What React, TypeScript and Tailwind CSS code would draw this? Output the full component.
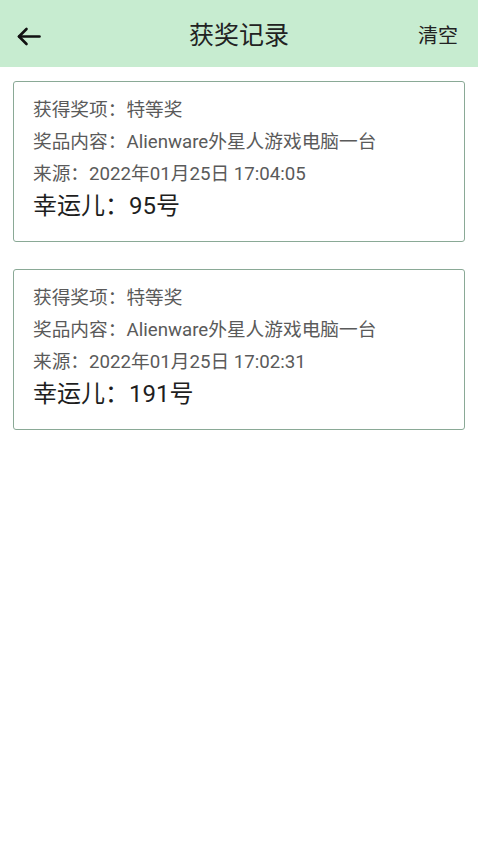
import React from 'react';

type Record = {
  prize: string;
  content: string;
  time: string;
  lucky: string;
};

const records: Record[] = [
  { prize: '特等奖', content: 'Alienware外星人游戏电脑一台', time: '2022年01月25日 17:04:05', lucky: '95号' },
  { prize: '特等奖', content: 'Alienware外星人游戏电脑一台', time: '2022年01月25日 17:02:31', lucky: '191号' },
];

const font = { fontFamily: 'Roboto, "Noto Sans CJK SC", sans-serif' };

const BackArrow: React.FC = () => (
  <svg width="24" height="19" viewBox="0 0 24 19" fill="none" stroke="#111" strokeWidth="2.6" strokeLinecap="round" strokeLinejoin="round">
    <path d="M22.5 9.5H2" />
    <path d="M9.5 2L2 9.5L9.5 17" />
  </svg>
);

const App: React.FC = () => {
  return (
    <div className="min-h-[850px] w-full bg-white" style={font}>
      <header className="grid h-[67px] grid-cols-[1fr_auto_1fr] items-center bg-[#c7ecd0] px-[17px] pt-[5px]">
        <div className="flex items-center">
          <BackArrow />
        </div>
        <h1 className="text-[25px] font-normal text-[#222]">获奖记录</h1>
        <div className="flex justify-end pr-[3px] text-[20px] text-[#222]">清空</div>
      </header>

      <div className="flex flex-col gap-[27px] px-[13px] pt-[14px]">
        {records.map((r, idx) => (
          <div
            key={idx}
            className="flex h-[161px] flex-col rounded-[3px] border border-[#8aa996] px-[19px] pt-[12px] text-[#5a5a5a]"
          >
            <p className="text-[18.7px] leading-[32px]">获得奖项：{r.prize}</p>
            <p className="text-[18.7px] leading-[32px]">奖品内容：{r.content}</p>
            <p className="text-[18.7px] leading-[32px]">来源：{r.time}</p>
            <p className="text-[24px] leading-[33px] text-[#1e1e1e]">幸运儿：{r.lucky}</p>
          </div>
        ))}
      </div>
    </div>
  );
};

export default App;
